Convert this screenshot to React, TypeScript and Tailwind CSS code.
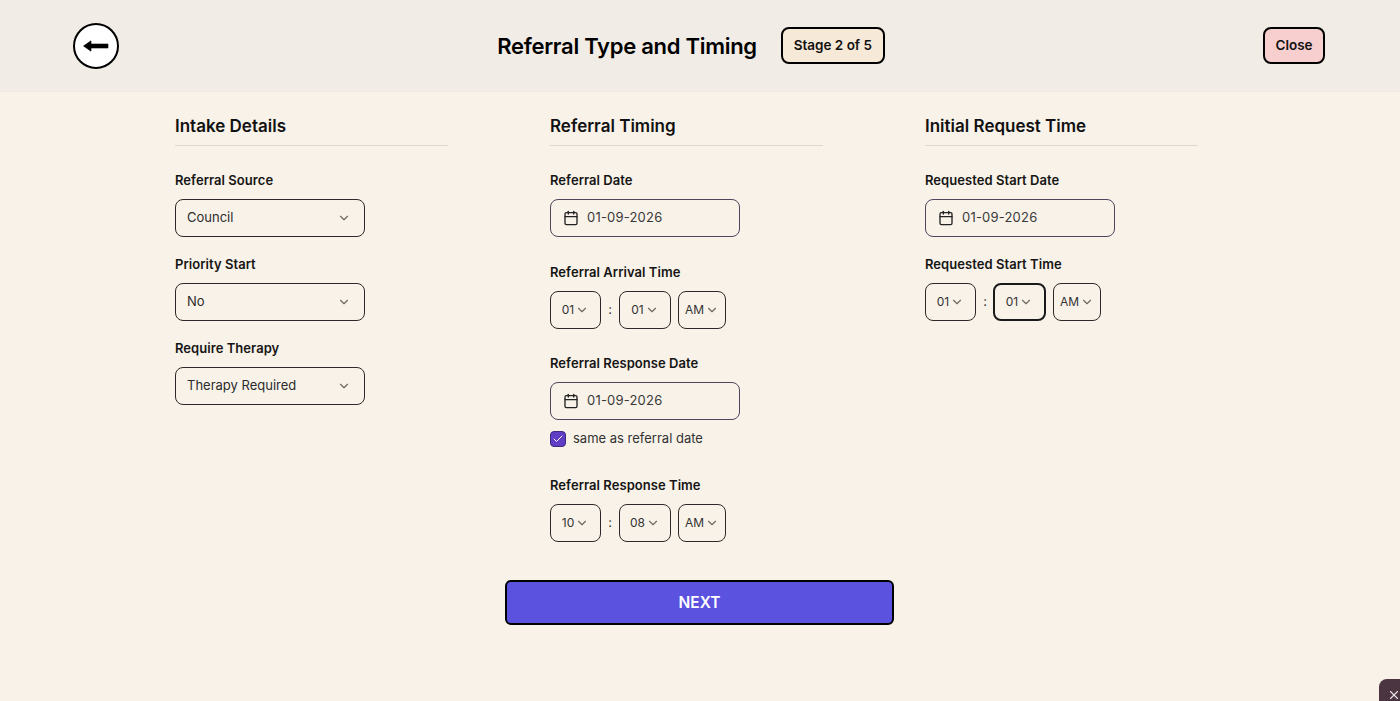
import { Calendar, ChevronDown, Check, X } from 'lucide-react';

const font = { fontFamily: 'Inter, "Noto Sans", sans-serif' };

function Heading({ title }: { title: string }) {
  return (
    <div className="h-[54px] border-b border-[#ddd8d2] pt-[21px] mb-[24px]">
      <h2 className="text-[17px] leading-[26px] font-semibold text-[#111]">{title}</h2>
    </div>
  );
}

function Label({ children, className = '' }: { children: string; className?: string }) {
  return <div className={`text-[13px] leading-5 font-semibold text-[#151515] tracking-[0.05px] ${className}`}>{children}</div>;
}

function SelectBox({ value }: { value: string }) {
  return (
    <div className="mt-[9px] w-[190px] h-[38px] rounded-lg border border-[#2c2a28] flex items-center justify-between pl-[11px] pr-[13px] text-[13px] text-[#2b2b2b]">
      <span>{value}</span>
      <ChevronDown size={14} className="text-[#6f6a64]" />
    </div>
  );
}

function DateBox() {
  return (
    <div className="mt-[9px] w-[190px] h-[38px] rounded-lg border border-[#4c475c] flex items-center pl-[12px] gap-[8px] text-[13px] tracking-[0.2px] text-[#3a3a3a]">
      <Calendar size={16} className="text-[#222]" />
      <span>01-09-2026</span>
    </div>
  );
}

function TimePart({ value, className }: { value: string; className: string }) {
  return (
    <div className={`h-[38px] rounded-lg flex items-center justify-center gap-[1px] text-[12px] text-[#333] ${className}`}>
      <span>{value}</span>
      <ChevronDown size={14} className="text-[#6f6a64]" />
    </div>
  );
}

function TimeRow({ h, m, focusMinute }: { h: string; m: string; focusMinute?: boolean }) {
  return (
    <div className="mt-[9px] flex items-center">
      <TimePart value={h} className="w-[51px] border border-[#2c2a28]" />
      <span className="w-[18px] text-center text-[13px] text-[#333]">:</span>
      <TimePart
        value={m}
        className={focusMinute ? 'w-[53px] -ml-px border-2 border-[#1a1a1a]' : 'w-[52px] border border-[#2c2a28]'}
      />
      <div className="w-[7px]" />
      <TimePart value="AM" className="w-[48px] border border-[#2c2a28]" />
    </div>
  );
}

export default function App() {
  return (
    <div style={font} className="relative w-[1400px] h-[701px] overflow-hidden bg-[#f9f2e9]">
      <header className="h-[92px] bg-[#f1ece5] border-b border-[#efe9e2] flex items-center justify-between pl-[73px] pr-[75px]">
        <button className="w-[46px] h-[46px] rounded-full bg-white border-2 border-black flex items-center justify-center">
          <svg width="26" height="12" viewBox="0 0 26 12">
            <path d="M0.5 6 L8 0.8 L8 4 L25 4 L25 8 L8 8 L8 11.2 Z" fill="#000" stroke="#000" strokeWidth="0.6" strokeLinejoin="round" />
          </svg>
        </button>
        <div className="flex items-center gap-6">
          <h1 className="text-[22px] leading-8 font-semibold text-black tracking-[-0.28px]">Referral Type and Timing</h1>
          <div className="w-[104px] h-[37px] rounded-lg border-2 border-black bg-[#f7e9d7] flex items-center justify-center text-[13.5px] font-semibold text-[#111]">
            Stage 2 of 5
          </div>
        </div>
        <button className="w-[62px] h-[37px] rounded-lg border-2 border-black bg-[#f8cfcf] text-[13.5px] font-semibold text-[#111]">
          Close
        </button>
      </header>

      <main className="pl-[175px] flex gap-[102px]">
        <section className="w-[273px]">
          <Heading title="Intake Details" />
          <Label>Referral Source</Label>
          <SelectBox value="Council" />
          <Label className="mt-[17px]">Priority Start</Label>
          <SelectBox value="No" />
          <Label className="mt-[17px]">Require Therapy</Label>
          <SelectBox value="Therapy Required" />
        </section>

        <section className="w-[273px]">
          <Heading title="Referral Timing" />
          <Label>Referral Date</Label>
          <DateBox />
          <Label className="mt-[25px]">Referral Arrival Time</Label>
          <TimeRow h="01" m="01" />
          <Label className="mt-[24px]">Referral Response Date</Label>
          <DateBox />
          <div className="mt-[9px] flex items-center gap-[7px] h-5 text-[13px] text-[#333]">
            <span className="w-4 h-4 rounded-[4px] bg-[#5f3dc4] border border-[#3b2a80] flex items-center justify-center">
              <Check size={12} strokeWidth={2} className="text-white" />
            </span>
            same as referral date
          </div>
          <Label className="mt-[26px]">Referral Response Time</Label>
          <TimeRow h="10" m="08" />
        </section>

        <section className="w-[273px]">
          <Heading title="Initial Request Time" />
          <Label>Requested Start Date</Label>
          <DateBox />
          <Label className="mt-[17px]">Requested Start Time</Label>
          <TimeRow h="01" m="01" focusMinute />
        </section>
      </main>

      <div className="mt-[38px] pl-[505px]">
        <button className="w-[389px] h-[45px] rounded-md border-2 border-black bg-[#5b52e0] text-white text-[15.5px] font-semibold">
          NEXT
        </button>
      </div>

      <div className="absolute left-[1379px] top-[679px] w-[40px] h-[40px] rounded-tl-lg bg-[#4a3540] flex pl-[8px] pt-[9px]">
        <X size={14} className="text-[#e8dfe0]" />
      </div>
    </div>
  );
}
